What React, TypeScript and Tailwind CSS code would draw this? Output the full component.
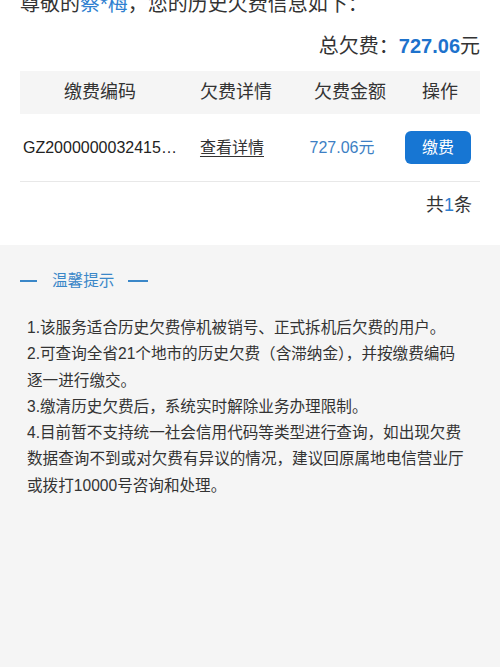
import React from 'react';

const font = { fontFamily: '"Liberation Sans", "Noto Sans CJK SC", sans-serif' };

const tips = [
  '1.该服务适合历史欠费停机被销号、正式拆机后欠费的用户。',
  '2.可查询全省21个地市的历史欠费（含滞纳金），并按缴费编码逐一进行缴交。',
  '3.缴清历史欠费后，系统实时解除业务办理限制。',
  '4.目前暂不支持统一社会信用代码等类型进行查询，如出现欠费数据查询不到或对欠费有异议的情况，建议回原属地电信营业厅或拨打10000号咨询和处理。',
];

export default function App() {
  return (
    <div className="w-[500px] h-[667px] overflow-hidden bg-[#f5f5f5] text-[#333]" style={font}>
      {/* Arrears info */}
      <div className="flow-root bg-white px-5 h-[245px]">
        <p className="-mt-[6px] text-[20px] leading-[20px] text-[#333]">
          尊敬的<span className="text-[#2f7fd0]">蔡*梅</span>，您的历史欠费信息如下：
        </p>
        <div className="mt-[20px] flex justify-end items-baseline text-[20px] leading-[24px]">
          <span>总欠费：</span>
          <span className="font-bold text-[#1d72cc]">727.06</span>
          <span>元</span>
        </div>

        {/* Table */}
        <div className="mt-[13px]">
          <div className="flex items-center h-[43px] bg-[#f5f5f5] text-[18px]">
            <div className="w-[160px] text-center">缴费编码</div>
            <div className="w-[112px] text-center">欠费详情</div>
            <div className="w-[116px] text-center">欠费金额</div>
            <div className="w-[64px] text-center">操作</div>
          </div>
          <div className="flex items-center h-[68px] border-b border-[#e8e8e8] text-[16px]">
            <div className="w-[160px] pl-[3px] pr-[1px] truncate text-[#222]">GZ2000000032415678</div>
            <div className="w-[112px] text-center pr-[8px]">
              <span className="underline underline-offset-[3px]">查看详情</span>
            </div>
            <div className="w-[113px] text-center pr-[13px] text-[#3d7fc4]">727.06元</div>
            <div className="w-[75px] flex justify-start">
              <button className="w-[66px] h-[33px] rounded-[6px] bg-[#1776d3] text-white text-[16px]">缴费</button>
            </div>
          </div>
          <div className="flex justify-end pr-2 pt-[11px] text-[18px] leading-[24px]">
            共<span className="text-[#2f7fd0]">1</span>条
          </div>
        </div>
      </div>

      {/* Tips */}
      <div className="px-5 pt-[25px]">
        <div className="flex items-center text-[15.6px] text-[#3a87c8] h-[22px]">
          <span className="w-[17px] h-[2px] bg-[#3a87c8]"></span>
          <span className="ml-[15px]">温馨提示</span>
          <span className="ml-[14px] w-[20px] h-[2px] bg-[#3a87c8]"></span>
        </div>
        <div className="mt-[23px] pl-[7px] w-[450px] text-[15.6px] leading-[26.3px] text-[#333]">
          {tips.map((t) => (
            <p key={t}>{t}</p>
          ))}
        </div>
      </div>
    </div>
  );
}
